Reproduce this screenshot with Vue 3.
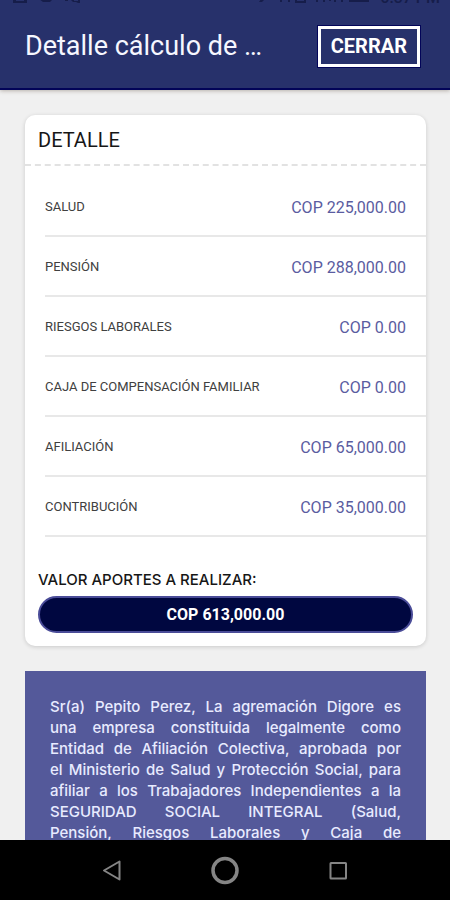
<script setup>
const rows = [
  { label: 'SALUD', value: 'COP 225,000.00' },
  { label: 'PENSIÓN', value: 'COP 288,000.00' },
  { label: 'RIESGOS LABORALES', value: 'COP 0.00' },
  { label: 'CAJA DE COMPENSACIÓN FAMILIAR', value: 'COP 0.00' },
  { label: 'AFILIACIÓN', value: 'COP 65,000.00' },
  { label: 'CONTRIBUCIÓN', value: 'COP 35,000.00' },
]

const noticeLines = [
  'Sr(a) Pepito Perez, La agremación Digore es',
  'una empresa constituida legalmente como',
  'Entidad de Afiliación Colectiva, aprobada por',
  'el Ministerio de Salud y Protección Social, para',
  'afiliar a los Trabajadores Independientes a la',
  'SEGURIDAD SOCIAL INTEGRAL (Salud,',
  'Pensión, Riesgos Laborales y Caja de',
]
</script>

<template>
  <div class="screen">
    <header class="top">
      <div class="status">
        <svg class="status-left" viewBox="0 0 70 5" aria-hidden="true">
          <path d="M1 0h3v2h8V0h3v4H1zM27 0h14l-3 3h-7zM53 0h3v2h-3zM58 0h4v2h4V0h2v4h-2l-2-1h-3z" />
        </svg>
        <div class="status-right">
          <svg class="status-icons" viewBox="0 0 114 5" aria-hidden="true">
            <path d="M3 0h4L4 3H1zM22 0h2v3h-2zM27 0h5v3h-2V1h-2zM37 0h2v2h7V0h2v4H37zM58 0h2v3h-2zM65 0h2v3h-2zM71 0h2v2h-2zM76 0h2v3h-2zM83 0h2v3h-2zM91 0h20v3H91z" />
          </svg>
          <span class="clock">6:37 PM</span>
        </div>
      </div>
      <div class="bar">
        <h1 class="title">Detalle cálculo de …</h1>
        <button class="close" type="button">CERRAR</button>
      </div>
    </header>

    <main class="content">
      <section class="card">
        <h2 class="card-title">DETALLE</h2>
        <dl class="rows">
          <div v-for="row in rows" :key="row.label" class="row">
            <dt class="label">{{ row.label }}</dt>
            <dd class="value">{{ row.value }}</dd>
          </div>
        </dl>
        <div class="total">
          <p class="total-label">VALOR APORTES A REALIZAR:</p>
          <p class="total-value">COP 613,000.00</p>
        </div>
      </section>

      <p class="notice">
        <span v-for="line in noticeLines" :key="line" class="notice-line">{{ line }}</span>
      </p>
    </main>

    <nav class="nav">
      <button class="nav-btn" type="button" aria-label="Atrás">
        <svg viewBox="0 0 30 30"><path d="M22.500 6.500v18L7 15.500z" stroke-width="2" stroke-linejoin="round" /></svg>
      </button>
      <button class="nav-btn" type="button" aria-label="Inicio">
        <svg viewBox="0 0 30 30"><circle cx="15" cy="15.500" r="12" stroke-width="3.500" /></svg>
      </button>
      <button class="nav-btn" type="button" aria-label="Recientes">
        <svg viewBox="0 0 30 30"><rect x="7.500" y="8" width="15.500" height="15.500" rx="0.500" stroke-width="2" /></svg>
      </button>
    </nav>
  </div>
</template>

<style>
body {
  margin: 0;
}
</style>

<style scoped>
.screen {
  display: flex;
  flex-direction: column;
  height: 100vh;
  overflow: hidden;
  background: #f0f0f0;
  font-family: Roboto, "Liberation Sans", sans-serif;
  color: #161616;
}

h1, h2, p, dl, dd {
  margin: 0;
  font-weight: 400;
}

.top {
  flex: none;
  background: #27316b;
  border-bottom: 2px solid #020458;
  box-shadow: 0 1px 4px rgba(60, 40, 20, 0.3);
}

.status {
  display: flex;
  justify-content: space-between;
  align-items: flex-end;
  height: 4px;
  padding: 0 10px 0 12px;
  overflow: hidden;
  color: #161d4a;
}

.status svg {
  display: block;
  height: 5px;
  fill: currentColor;
}

.status-left {
  width: 70px;
}

.status-right {
  display: flex;
  align-items: flex-end;
  gap: 8px;
}

.status-icons {
  width: 114px;
}

.clock {
  font-size: 16px;
  font-weight: 500;
  line-height: 12px;
}

.bar {
  display: flex;
  align-items: center;
  justify-content: space-between;
  gap: 24px;
  height: 64px;
  padding: 10px 30px 10px 25px;
}

.title {
  flex: 1;
  min-width: 0;
  overflow: hidden;
  text-overflow: ellipsis;
  white-space: nowrap;
  font-size: 27px;
  line-height: 32px;
  color: #f6f7ff;
}

.close {
  flex: none;
  height: 41px;
  padding: 0 10px;
  border: 3px solid #fff;
  outline: 1px solid #020458;
  background: #27316b;
  font: 700 20px/24px Roboto, "Liberation Sans", sans-serif;
  color: #fff;
}

.content {
  flex: 1;
  min-height: 0;
  overflow: hidden;
  padding: 25px 24px 0 25px;
}

.card {
  border-radius: 10px;
  background: #fff;
  box-shadow: 0 1px 4px rgba(0, 0, 0, 0.16);
}

.card-title {
  padding: 9px 13px 8px;
  font-size: 20px;
  line-height: 32px;
  border-bottom: 2px dashed #e2e2e2;
}

.rows {
  padding: 11px 0 0 20px;
}

.row {
  display: flex;
  align-items: center;
  justify-content: space-between;
  height: 58px;
  padding-right: 20px;
  border-bottom: 2px solid #e8e8e8;
}

.label {
  font-size: 13px;
  color: #404040;
}

.value {
  padding-top: 3px;
  font-size: 16px;
  color: #5a5ca0;
}

.total {
  padding: 33px 13px 13px;
}

.total-label {
  font-family: Inter, Roboto, sans-serif;
  font-size: 15px;
  font-weight: 500;
  line-height: 20px;
}

.total-value {
  margin-top: 6px;
  padding: 7px;
  border: 2px solid #4a4c98;
  border-radius: 20px;
  background: #000740;
  font-size: 16px;
  font-weight: 700;
  line-height: 19px;
  text-align: center;
  color: #fff;
}

.notice {
  margin-top: 25px;
  padding: 25px;
  background: #54599a;
  font-family: Inter, Roboto, sans-serif;
  font-size: 15px;
  font-weight: 500;
  line-height: 21px;
  color: #e8ebff;
}

.notice-line {
  display: block;
  text-align: justify;
  text-align-last: justify;
}

.nav {
  flex: none;
  display: grid;
  grid-template-columns: repeat(3, 1fr);
  justify-items: center;
  align-items: center;
  height: 60px;
  padding: 0 56px;
  background: #000;
}

.nav-btn {
  padding: 0;
  border: 0;
  background: none;
  width: 30px;
  height: 30px;
}

.nav-btn svg {
  display: block;
  fill: none;
  stroke: #858585;
}
</style>
